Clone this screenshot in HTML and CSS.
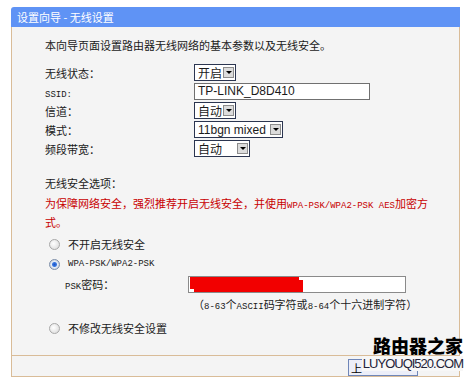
FILE: index.html
```html
<!DOCTYPE html>
<html lang="zh-CN">
<head>
  <meta charset="UTF-8">
  <title>设置向导 - 无线设置</title>
  <link rel="stylesheet" href="styles.css">
</head>
<body>

  <div class="panel">
    <div class="panel-head">设置向导 - 无线设置</div>

    <div class="panel-body">
      <p class="intro">本向导页面设置路由器无线网络的基本参数以及无线安全。</p>

      <div class="form-rows">
        <div class="row">
          <span class="lbl">无线状态：</span>
          <div class="sel w-on"><span class="val">开启</span><span class="arr"></span></div>
        </div>
        <div class="row">
          <span class="lbl"><span class="asc">SSID:</span></span>
          <div class="txt ssid">TP-LINK_D8D410</div>
        </div>
        <div class="row">
          <span class="lbl">信道：</span>
          <div class="sel w-on"><span class="val">自动</span><span class="arr"></span></div>
        </div>
        <div class="row">
          <span class="lbl">模式：</span>
          <div class="sel w-mode"><span class="val">11bgn mixed</span><span class="arr"></span></div>
        </div>
        <div class="row">
          <span class="lbl">频段带宽：</span>
          <div class="sel w-bw"><span class="val">自动</span><span class="arr"></span></div>
        </div>
      </div>

      <p class="sec-title">无线安全选项：</p>
      <p class="warn">为保障网络安全，强烈推荐开启无线安全，并使用<span class="asc">WPA-PSK/WPA2-PSK AES</span>加密方<br>式。</p>

      <div class="opt first"><span class="radio"></span>不开启无线安全</div>
      <div class="opt"><span class="radio on"></span><span class="asc">WPA-PSK/WPA2-PSK</span></div>
      <div class="psk-row">
        <span class="psk-lbl"><span class="asc">PSK</span>密码：</span>
        <div class="txt psk"><span class="redact"></span></div>
      </div>
      <div class="hint">（<span class="asc">8-63</span>个<span class="asc">ASCII</span>码字符或<span class="asc">8-64</span>个十六进制字符）</div>
      <div class="opt last"><span class="radio"></span>不修改无线安全设置</div>
    </div>

    <div class="panel-foot">
      <button class="btn" type="button">上</button>
    </div>
  </div>

  <div class="watermark">
    <span class="wm-cn">路由器之家</span>
    <span class="wm-en">LUYOUQI520.COM</span>
  </div>

</body>
</html>
```

FILE: styles.css
```css
body { margin: 0; background: #fff; font-family: "Noto Sans CJK SC", sans-serif; font-size: 11px; color: #1a1a1a; }
p { margin: 0; line-height: 16px; }
.asc { font-family: "Liberation Mono", monospace; font-size: 9px; }

.panel { margin: 7px 0 0 11px; width: 449px; }
.panel-head { height: 20px; line-height: 20px; background: #5f93f5; color: #fff; padding-left: 6px; border-radius: 3px 0 0 0; }
.panel-body { background: #f4f4f4; border-left: 1px solid #d9bc98; border-right: 1px solid #d9bc98; padding: 10px 0 17px 33px; }

.form-rows { margin-top: 10px; }
.row { height: 19px; display: flex; align-items: center; }
.lbl { width: 149px; }

.sel { height: 17px; box-sizing: border-box; display: flex; align-items: center; justify-content: space-between; border: 1px solid #2b3550; background: #fff; padding: 0 1px 0 3px; font-family: "Liberation Sans", "Noto Sans CJK SC", sans-serif; font-size: 12px; }
.sel .arr { width: 11px; height: 11px; box-sizing: border-box; border: 1px solid #8c8c8c; background: #dcdcdc; display: flex; align-items: center; justify-content: center; }
.sel .arr::after { content: ""; border-left: 3px solid transparent; border-right: 3px solid transparent; border-top: 3px solid #000; }
.w-on { width: 42px; }
.w-mode { width: 89px; }
.w-bw { width: 56px; }

.txt { height: 17px; box-sizing: border-box; border: 1px solid #707070; background: #fff; font-family: "Liberation Sans", sans-serif; font-size: 12px; line-height: 15px; padding-left: 3px; }
.ssid { width: 176px; }

.sec-title { margin-top: 17px; }
.warn { margin-top: 4px; color: #c80000; }

.opt { height: 20px; line-height: 20px; display: flex; align-items: center; padding-left: 4px; }
.opt.first { margin-top: 4px; }
.opt.last { margin-top: 4px; }
.radio { width: 11px; height: 11px; box-sizing: border-box; border-radius: 50%; border: 1px solid #a8a8a8; background: radial-gradient(circle at 40% 40%, #fff, #d6d6d6); margin-right: 8px; }
.radio.on { border-color: #7d8ea8; background: radial-gradient(circle, #1c55c8 0, #3a78e0 2px, #e4ecf6 3px, #c8d0da 5px); }

.psk-row { height: 20px; display: flex; align-items: center; padding-left: 20px; }
.psk-lbl { width: 123px; }
.psk { width: 218px; padding: 0; border-color: #8a8a8a; }
.redact { display: block; width: 109px; height: 12px; margin: 3px 0 0 5px; background: #f20000; box-shadow: -4px -3px 0 #f20000; }
.hint { height: 20px; line-height: 20px; padding-left: 148px; }

.panel-foot { height: 22px; box-sizing: border-box; background: #f4f4f4; border: 1px solid #d9bc98; padding: 3px 0 0 336px; }
.btn { height: 17px; width: 70px; padding: 0 0 0 2px; text-align: left; border: 1px solid #6f86b8; background: #eceef8; font-family: "Noto Sans CJK SC", sans-serif; font-size: 11px; line-height: 14px; color: #000; }

.watermark { position: absolute; top: 337px; right: 5px; display: flex; flex-direction: column; align-items: flex-end; gap: 2px; }
.wm-cn { font-size: 18px; font-weight: 900; line-height: 17px; color: #000; }
.wm-en { font-family: "Liberation Sans", sans-serif; font-size: 13px; letter-spacing: -1px; line-height: 15px; color: #23233a; background: #f7f7f7; padding-left: 1px; }
```
